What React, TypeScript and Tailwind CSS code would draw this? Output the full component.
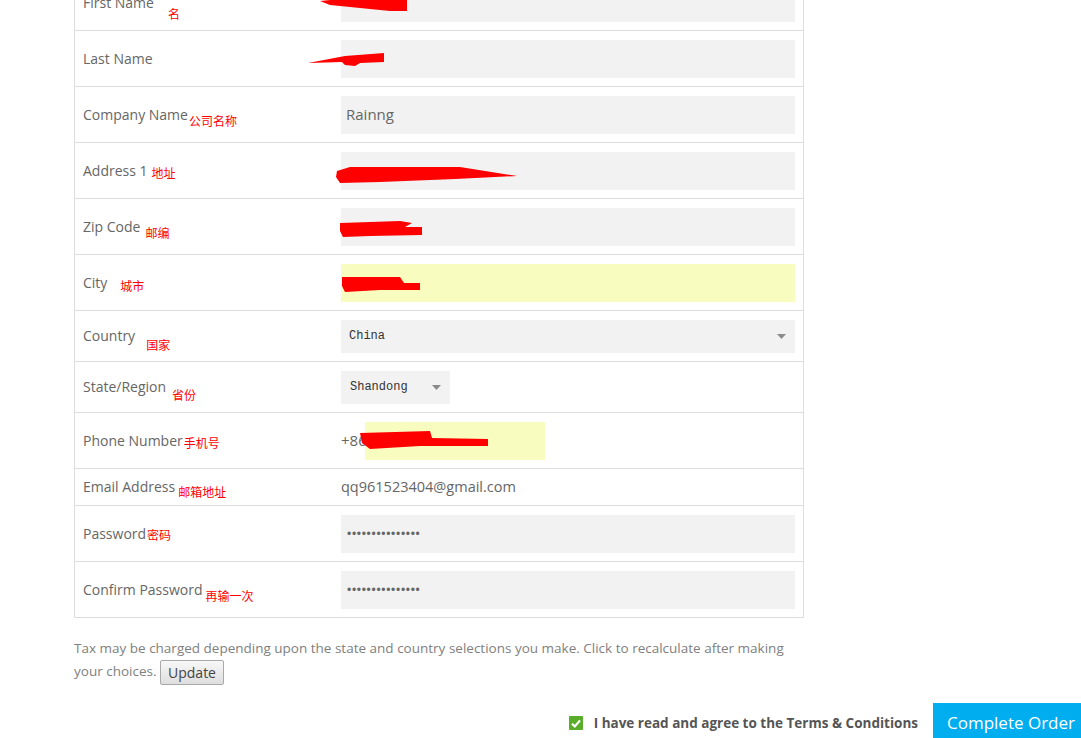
import React from "react";

/* red scribbles drawn over the filled-in values (points are local to the field) */
const Scribble: React.FC<{ points: string }> = ({ points }) => (
  <svg
    aria-hidden
    width="1"
    height="1"
    className="pointer-events-none absolute left-0 top-0 overflow-visible"
  >
    <polygon points={points} fill="#ff0000" />
  </svg>
);

const Note: React.FC<{ text: string; className: string }> = ({ text, className }) => (
  <span
    className={[
      "relative inline-block text-[12px] leading-none text-[#ff0000] [font-family:'Noto_Sans_CJK_SC',sans-serif]",
      className,
    ].join(" ")}
  >
    {text}
  </span>
);

const Field: React.FC<{ value?: string; yellow?: boolean; scribble?: string }> = ({
  value,
  yellow,
  scribble,
}) => (
  <div
    className={[
      "relative flex h-[38px] w-full items-center pl-[5px] text-[15px] text-[#666]",
      yellow ? "bg-[#f9fcbf]" : "bg-[#f2f2f2]",
    ].join(" ")}
  >
    {value}
    {scribble && <Scribble points={scribble} />}
  </div>
);

const Caret = () => (
  <svg width="9" height="5" viewBox="0 0 9 5" aria-hidden>
    <polygon points="0,0 9,0 4.5,5" fill="#8a8a8a" />
  </svg>
);

const Dots = () => (
  <div className="flex h-[38px] w-full items-center bg-[#f2f2f2] pl-[6px]">
    <span className="text-[12px] tracking-[0.7px] text-[#666] [font-family:'Liberation_Sans',sans-serif]">
      •••••••••••••••
    </span>
  </div>
);

type Row = {
  label: string;
  note: string;
  noteCls: string;
  h: string;
  value: React.ReactNode;
};

const rows: Row[] = [
  {
    label: "First Name",
    note: "名",
    noteCls: "ml-[14px] top-[12px]",
    h: "h-[56px]",
    value: <Field scribble="-21,17 -1,15 66,15 66,27 49,27 9,23 -11,21" />,
  },
  {
    label: "Last Name",
    note: "",
    noteCls: "",
    h: "h-[56px]",
    value: <Field scribble="-33,23 4,16 43,13 43,22 19,23 14,26 4,25 1,22" />,
  },
  {
    label: "Company Name",
    note: "公司名称",
    noteCls: "ml-[1px] top-[7px]",
    h: "h-[56px]",
    value: <Field value="Rainng" />,
  },
  {
    label: "Address 1",
    note: "地址",
    noteCls: "ml-[4px] top-[3px]",
    h: "h-[56px]",
    value: <Field scribble="-4,19 9,15 119,15 176,24 114,27 39,30 -1,31 -5,25" />,
  },
  {
    label: "Zip Code",
    note: "邮编",
    noteCls: "ml-[5px] top-[7px]",
    h: "h-[56px]",
    value: <Field scribble="-1,15 59,13 71,15 64,19 81,19 81,27 29,28 2,29 -1,23" />,
  },
  {
    label: "City",
    note: "城市",
    noteCls: "ml-[13px] top-[4px]",
    h: "h-[56px]",
    value: <Field yellow scribble="1,13 59,13 63,19 79,19 79,26 39,26 4,28 1,22" />,
  },
  {
    label: "Country",
    note: "国家",
    noteCls: "ml-[11px] top-[9px]",
    h: "h-[51px]",
    value: (
      <div className="flex h-[33px] w-full items-center justify-between bg-[#f2f2f2] pl-[8px] pr-[9px]">
        <span className="text-[12px] text-[#333] [font-family:'Liberation_Mono',monospace]">China</span>
        <Caret />
      </div>
    ),
  },
  {
    label: "State/Region",
    note: "省份",
    noteCls: "ml-[6px] top-[8px]",
    h: "h-[51px]",
    value: (
      <div className="flex h-[33px] w-[109px] items-center justify-between bg-[#f2f2f2] pl-[9px] pr-[9px]">
        <span className="text-[12px] text-[#333] [font-family:'Liberation_Mono',monospace]">Shandong</span>
        <Caret />
      </div>
    ),
  },
  {
    label: "Phone Number",
    note: "手机号",
    noteCls: "ml-[1px] top-[3px]",
    h: "h-[56px]",
    value: (
      <div className="relative flex h-[38px] items-center text-[15px] text-[#666]">
        <span className="w-[24px]">+86</span>
        <div className="h-[38px] w-[180px] bg-[#f9fcbf]" />
        <Scribble points="19,11 89,9 91,16 147,17 147,24 79,24 29,27 21,21" />
      </div>
    ),
  },
  {
    label: "Email Address",
    note: "邮箱地址",
    noteCls: "ml-[3px] top-[5px]",
    h: "h-[37px]",
    value: <span className="text-[14.5px] text-[#666]">qq961523404@gmail.com</span>,
  },
  {
    label: "Password",
    note: "密码",
    noteCls: "ml-[1px] top-[2px]",
    h: "h-[56px]",
    value: <Dots />,
  },
  {
    label: "Confirm Password",
    note: "再输一次",
    noteCls: "ml-[3px] top-[7px]",
    h: "h-[56px]",
    value: <Dots />,
  },
];

export default function App() {
  return (
    <div className="h-[738px] w-[1081px] overflow-hidden bg-white [font-family:'Open_Sans',sans-serif]">
      {/* ── form table ───────────────────────────── */}
      <div className="ml-[74px] mt-[-26px] w-[730px] border border-b-0 border-[#dddddd]">
        {rows.map((r) => (
          <div key={r.label} className={`flex border-b border-[#dddddd] ${r.h}`}>
            <div className="flex w-[257px] items-center pb-[1px] pl-[8px] text-[14px] text-[#666]">
              <span>{r.label}</span>
              {r.note && <Note text={r.note} className={r.noteCls} />}
            </div>
            <div className="flex flex-1 items-center pl-[9px] pr-[8px]">{r.value}</div>
          </div>
        ))}
      </div>

      {/* ── tax note ─────────────────────────────── */}
      <p className="ml-[74px] mt-[19px] w-[730px] text-[13.5px] leading-[23px] text-[#808080]">
        Tax may be charged depending upon the state and country selections you make. Click to recalculate
        after making your choices.{" "}
        <button className="inline-flex h-[25px] items-center rounded-[2px] border border-[#a9a9a9] bg-gradient-to-b from-[#f8f8f8] to-[#dedede] px-[7px] align-middle text-[14px] leading-none text-[#444]">
          Update
        </button>
      </p>

      {/* ── terms + submit ───────────────────────── */}
      <div className="mt-[18px] flex items-center justify-end">
        <span className="mr-[11px] flex h-[14px] w-[14px] items-center justify-center rounded-[1px] bg-[#5aad2b]">
          <svg width="10" height="9" viewBox="0 0 10 9" aria-hidden>
            <path d="M1 4.8 L3.8 7.4 L9 1.4" fill="none" stroke="#fff" strokeWidth="2.2" />
          </svg>
        </span>
        <span className="mr-[15px] whitespace-nowrap text-[13.5px] font-bold text-[#555]">
          I have read and agree to the Terms &amp; Conditions
        </span>
        <button className="h-[40px] w-[148px] whitespace-nowrap bg-[#00aeef] pl-[14px] text-left text-[17px] text-white">
          Complete Order
        </button>
      </div>
    </div>
  );
}
